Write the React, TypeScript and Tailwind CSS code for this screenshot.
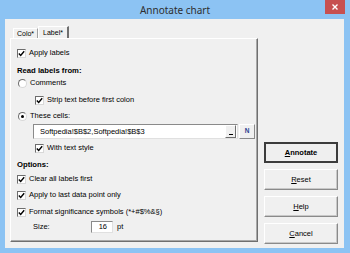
import React from "react";

const Check = () => (
  <div className="w-[9px] h-[9px] shrink-0 bg-white border border-t-[#6d6d6d] border-l-[#6d6d6d] border-b-[#d8d8d8] border-r-[#d8d8d8] flex items-center justify-center">
    <svg width="7" height="7" viewBox="0 0 7 7">
      <path d="M0.8 3.4 L2.7 5.4 L6.2 1.2" stroke="#000" strokeWidth="1.4" fill="none" />
    </svg>
  </div>
);

const Radio = ({ on }: { on?: boolean }) => (
  <div className="w-[9px] h-[9px] shrink-0 rounded-full bg-white border border-t-[#6d6d6d] border-l-[#6d6d6d] border-b-[#d8d8d8] border-r-[#d8d8d8] flex items-center justify-center">
    {on && <div className="w-[3px] h-[3px] rounded-full bg-black" />}
  </div>
);

const Btn = ({ children, def }: { children: React.ReactNode; def?: boolean }) => (
  <div
    className={
      "h-[21px] w-full flex items-center justify-center text-[7.5px] text-black " +
      (def
        ? "border-[2px] border-[#3c3c3c] bg-[#efefef] font-bold"
        : "border border-t-white border-l-white border-b-[#8a8a8a] border-r-[#8a8a8a] shadow-[inset_-1px_-1px_0_#c8c8c8] bg-[#f0f0f0]")
    }
  >
    {children}
  </div>
);

export default function App() {
  return (
    <div
      className="w-[350px] h-[253px] bg-[#8cc3f3] flex flex-col pl-[5px] pr-[6px] pb-[5px]"
      style={{ fontFamily: '"Liberation Sans", Arial, sans-serif' }}
    >
      <div className="relative h-[19px] -mr-[6px] -ml-[5px] flex items-center justify-center">
        <span className="text-[10px] text-[#2f2f2f] leading-none" style={{ fontFamily: '"Noto Sans", sans-serif' }}>
          Annotate chart
        </span>
        <div className="absolute right-[5px] top-0 w-[20px] h-[14px] bg-[#c75050] flex items-center justify-center">
          <svg width="6" height="6" viewBox="0 0 6 6">
            <path d="M0.5 0.5 L5.5 5.5 M5.5 0.5 L0.5 5.5" stroke="#fff" strokeWidth="1.4" />
          </svg>
        </div>
      </div>
      <div className="flex-1 bg-[#f0f0f0] flex text-[7.5px] text-black leading-none">
        {/* left column */}
        <div className="ml-[5px] w-[248px] flex flex-col pt-[7px]">
          <div className="flex items-end h-[12px] pl-[3px]">
            <div className="h-[10px] w-[25px] border-t border-l border-t-white border-l-white border-r border-r-[#a0a0a0] flex items-center justify-center text-[7px]">
              Colo*
            </div>
            <div className="h-[12px] w-[31px] border-t border-l border-t-white border-l-white border-r-[2px] border-r-[#6f6f6f] flex items-center justify-center text-[7px] pb-[1px]">
              Label*
            </div>
          </div>
          <div className="h-[204px] border border-t-white border-l-white border-b-[#6f6f6f] border-r-[#6f6f6f] shadow-[inset_-1px_-1px_0_#a8a8a8] flex flex-col pl-[6px] pt-[8px]">
            <div className="flex items-center h-[12px] gap-[3px]">
              <Check />
              <span>Apply labels</span>
            </div>
            <div className="flex items-center h-[12px] mt-[6px] font-bold text-[7.7px]">Read labels from:</div>
            <div className="flex items-center h-[12px] gap-[3px] pl-[1px]">
              <Radio />
              <span>Comments</span>
            </div>
            <div className="flex items-center h-[12px] gap-[3px] mt-[5px] pl-[18px]">
              <Check />
              <span>Strip text before first colon</span>
            </div>
            <div className="flex items-center h-[12px] gap-[3px] mt-[4px] pl-[1px]">
              <Radio on />
              <span>These cells:</span>
            </div>
            <div className="flex items-center mt-[2px] pl-[16px] gap-[1px]">
              <div className="w-[205px] h-[15px] bg-white border border-t-[#8a8a8a] border-l-[#8a8a8a] border-b-[#e0e0e0] border-r-[#e0e0e0] flex items-center pl-[6px] pr-[1px]">
                <span className="flex-1">Softpedia!$B$2,Softpedia!$B$3</span>
                <div className="w-[11px] h-[13px] bg-[#f0f0f0] border border-t-white border-l-white border-b-[#6f6f6f] border-r-[#6f6f6f] flex items-end justify-center pb-[2px]">
                  <div className="w-[4px] h-[1.5px] bg-black" />
                </div>
              </div>
              <div className="w-[16px] h-[15px] bg-[#f0f0f0] border border-t-white border-l-white border-b-[#8a8a8a] border-r-[#8a8a8a] flex items-center justify-center font-bold text-[6.5px] text-[#2a3f8f]">
                N
              </div>
            </div>
            <div className="flex items-center h-[12px] gap-[3px] mt-[3px] pl-[18px]">
              <Check />
              <span>With text style</span>
            </div>
            <div className="flex items-center h-[12px] mt-[5px] font-bold text-[7.7px]">Options:</div>
            <div className="flex items-center h-[12px] gap-[3px] mt-[2px]">
              <Check />
              <span>Clear all labels first</span>
            </div>
            <div className="flex items-center h-[12px] gap-[3px] mt-[4px]">
              <Check />
              <span>Apply to last data point only</span>
            </div>
            <div className="flex items-center h-[12px] gap-[3px] mt-[5px]">
              <Check />
              <span>Format significance symbols (*+#$%&amp;§)</span>
            </div>
            <div className="flex items-center h-[12px] mt-[3px] pl-[16px]">
              <span className="w-[58px]">Size:</span>
              <div className="w-[22px] h-[12px] bg-white border border-t-[#8a8a8a] border-l-[#8a8a8a] border-b-[#e0e0e0] border-r-[#e0e0e0] flex items-center justify-end pr-[5px]">
                16
              </div>
              <span className="ml-[4px]">pt</span>
            </div>
          </div>
        </div>
        {/* right column */}
        <div className="ml-[6px] w-[74px] flex flex-col gap-[6px] pt-[123px]">
          <Btn def>
            <span>
              <span className="underline">A</span>nnotate
            </span>
          </Btn>
          <Btn>
            <span>
              <span className="underline">R</span>eset
            </span>
          </Btn>
          <Btn>
            <span>
              <span className="underline">H</span>elp
            </span>
          </Btn>
          <Btn>
            <span>
              <span className="underline">C</span>ancel
            </span>
          </Btn>
        </div>
      </div>
    </div>
  );
}
